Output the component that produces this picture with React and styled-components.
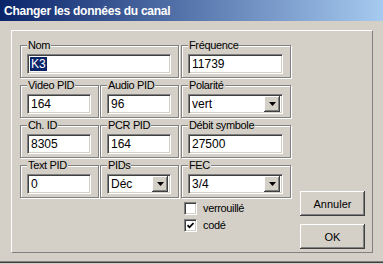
import styled, { createGlobalStyle } from "styled-components"

const GlobalStyle = createGlobalStyle`
    body {
        margin: 0;
        background: #d4d0c8;
        font-family: "Liberation Sans", Arial, sans-serif;
    }
`

const Window = styled.div`
    width: 383px;
    height: 264px;
    background: #d4d0c8;
    overflow: hidden;
`

const TitleBar = styled.div`
    height: 21px;
    box-sizing: border-box;
    padding: 3px 0 0 4px;
    background: linear-gradient(to right, #0a246a 0%, #a6caf0 100%);
    color: #fff;
    font-weight: 700;
    font-size: 12px;
    letter-spacing: -0.25px;
    line-height: 16px;
`

const Body = styled.div`
    height: 242px;
    box-sizing: border-box;
    padding: 9px 0 0 11px;
    border-bottom: 1px solid #404040;
    box-shadow: inset 0 -1px 0 #808080;
`

const Panel = styled.div`
    width: 362px;
    height: 223px;
    box-sizing: border-box;
    display: flex;
    padding: 8px 7px 3px 8px;
    border-top: 1px solid #fff;
    border-left: 1px solid #fff;
    border-right: 1px solid #808080;
    border-bottom: 1px solid #808080;
`

const LeftColumn = styled.div`
    display: flex;
    flex-direction: column;
`

const Groups = styled.div`
    display: grid;
    grid-template-columns: 80px 81px 110px;
    row-gap: 1px;
`

const Group = styled.fieldset`
    margin: 0;
    min-width: 0;
    width: ${props => props.$width}px;
    box-sizing: border-box;
    padding: 3px 7px 3px 6px;
    border: 1px solid #808080;
    box-shadow: inset 1px 1px 0 #fff, 1px 1px 0 #fff;
    ${props => props.$span && `grid-column: span ${props.$span};`}
`

const Legend = styled.legend`
    padding: 0 1px;
    font-size: 11px;
    letter-spacing: -0.35px;
    line-height: 12px;
    color: #000;
    background: #d4d0c8;
`

const Field = styled.div`
    height: 20px;
    box-sizing: border-box;
    display: flex;
    align-items: center;
    background: #fff;
    border-top: 1px solid #808080;
    border-left: 1px solid #808080;
    border-right: 1px solid #fff;
    border-bottom: 1px solid #fff;
    box-shadow: inset 1px 1px 0 #404040, inset -1px -1px 0 #d4d0c8;
    padding: 0 2px 0 3px;
    font-size: 12px;
    color: #000;
    line-height: 14px;
`

const Selected = styled.span`
    background: #0a246a;
    color: #fff;
    padding: 0 1px;
    margin-left: -1px;
`

const Value = styled.span`
    flex: 1;
`

const DropButton = styled.div`
    width: 16px;
    height: 16px;
    box-sizing: border-box;
    display: flex;
    align-items: center;
    justify-content: center;
    background: #d4d0c8;
    box-shadow: inset -1px -1px 0 #404040, inset 1px 1px 0 #fff, inset -2px -2px 0 #808080;
`

const Checks = styled.div`
    display: flex;
    flex-direction: column;
    gap: 4px;
    margin: 4px 0 0 164px;
`

const CheckRow = styled.div`
    display: flex;
    align-items: center;
    font-size: 11px;
    letter-spacing: -0.35px;
    line-height: 13px;
    gap: 6px;
`

const CheckBox = styled.div`
    width: 13px;
    height: 13px;
    box-sizing: border-box;
    display: flex;
    align-items: center;
    justify-content: center;
    background: #fff;
    border-top: 1px solid #808080;
    border-left: 1px solid #808080;
    border-right: 1px solid #fff;
    border-bottom: 1px solid #fff;
    box-shadow: inset 1px 1px 0 #404040, inset -1px -1px 0 #d4d0c8;
`

const Buttons = styled.div`
    margin-left: auto;
    display: flex;
    flex-direction: column;
    justify-content: flex-end;
    gap: 8px;
`

const Button = styled.button`
    width: 65px;
    height: 25px;
    padding: 0;
    border: none;
    background: #d4d0c8;
    box-shadow: inset -1px -1px 0 #404040, inset 1px 1px 0 #fff, inset -2px -2px 0 #808080;
    font-family: "Liberation Sans", Arial, sans-serif;
    font-size: 11px;
    color: #000;
`

const Arrow = () => (
    <svg width="7" height="4" viewBox="0 0 7 4">
        <path d="M0 0h7L3.5 4z" fill="#000" />
    </svg>
)

const Check = () => (
    <svg width="7" height="7" viewBox="0 0 7 7">
        <path d="M0.5 3.2 L2.5 5.3 L6.5 1" fill="none" stroke="#000" strokeWidth="1.7" />
    </svg>
)

const TextGroup = ({ label, value, width, span, selected }) => (
    <Group $width={width} $span={span}>
        <Legend>{label}</Legend>
        <Field>{selected ? <Selected>{value}</Selected> : value}</Field>
    </Group>
)

const SelectGroup = ({ label, value, width }) => (
    <Group $width={width}>
        <Legend>{label}</Legend>
        <Field>
            <Value>{value}</Value>
            <DropButton><Arrow /></DropButton>
        </Field>
    </Group>
)

const App = () => {
    return (
        <Window>
            <GlobalStyle />
            <TitleBar>Changer les données du canal</TitleBar>
            <Body>
                <Panel>
                    <LeftColumn>
                        <Groups>
                            <TextGroup label="Nom" value="K3" width={159} span={2} selected />
                            <TextGroup label="Fréquence" value="11739" width={110} />
                            <TextGroup label="Video PID" value="164" width={79} />
                            <TextGroup label="Audio PID" value="96" width={79} />
                            <SelectGroup label="Polarité" value="vert" width={110} />
                            <TextGroup label="Ch. ID" value="8305" width={79} />
                            <TextGroup label="PCR PID" value="164" width={79} />
                            <TextGroup label="Débit symbole" value="27500" width={110} />
                            <TextGroup label="Text PID" value="0" width={79} />
                            <SelectGroup label="PIDs" value="Déc" width={79} />
                            <SelectGroup label="FEC" value="3/4" width={110} />
                        </Groups>
                        <Checks>
                            <CheckRow><CheckBox />verrouillé</CheckRow>
                            <CheckRow><CheckBox><Check /></CheckBox>codé</CheckRow>
                        </Checks>
                    </LeftColumn>
                    <Buttons>
                        <Button>Annuler</Button>
                        <Button>OK</Button>
                    </Buttons>
                </Panel>
            </Body>
        </Window>
    )
}

export default App
